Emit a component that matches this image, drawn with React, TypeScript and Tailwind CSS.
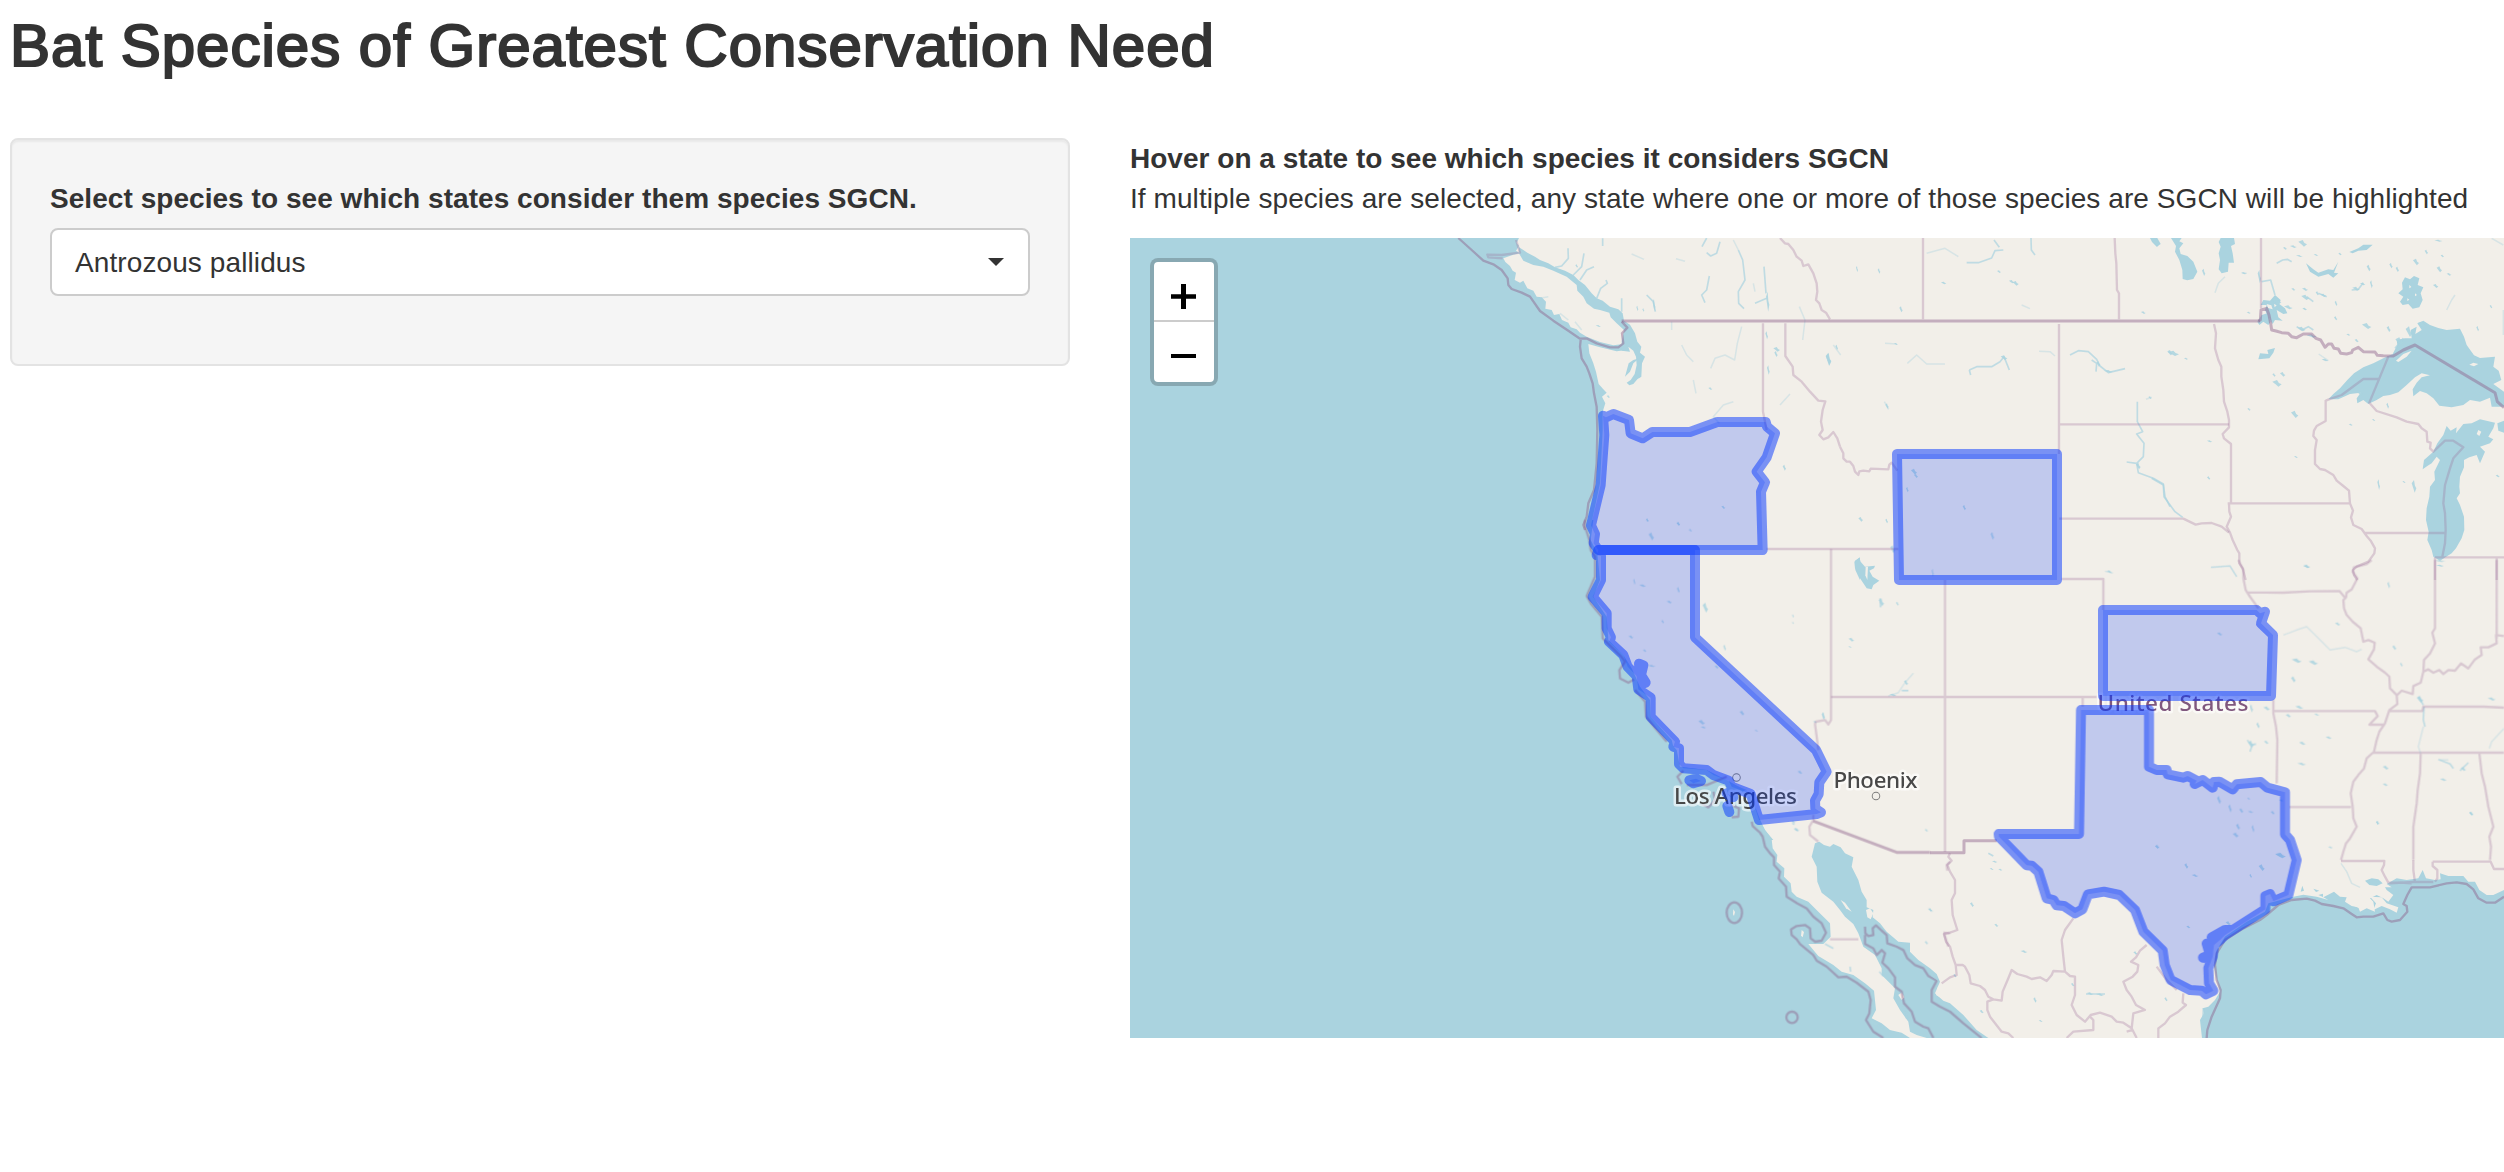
import React from "react";

const LAND = "#f2efe9";
const WATER = "#aad3df";

type Tile = {
  x: number;
  y: number;
  water?: string[];
  land?: string[];
  rivers?: string;
  thinRivers?: string;
  lakes?: number[][];
  country?: string;
  maritime?: string;
  region?: string;
};

/* Each tile is drawn on a grid three times finer than the page. */
const tiles: Tile[] = [
  {
    // Pacific Northwest
    x: 1440,
    y: 230,
    water: [
      "M-930,24 H237 L230,38 237,48 228,62 240,70 220,74 190,85 196,96 210,108 218,122 228,128 224,150 240,158 250,152 262,175 280,182 290,200 305,202 318,215 316,236 335,240 342,255 358,252 366,270 385,278 392,292 410,298 420,308 440,320 480,336 520,346 550,342 560,360 530,364 480,352 445,342 448,370 460,400 468,425 476,462 490,478 500,488 486,500 496,520 488,545 488,600 480,760 450,900 H-930Z",
      "M235,50 L250,60 262,68 285,80 300,90 325,100 345,112 375,122 400,135 415,150 435,165 455,190 470,205 488,212 510,230 535,238 548,250 552,272 570,284 585,310 592,335 604,350 600,368 615,380 606,400 604,440 592,448 580,462 568,466 560,458 572,450 584,432 590,405 588,380 580,362 565,350 570,365 545,362 545,335 552,300 530,280 512,262 508,248 480,240 462,236 440,220 430,200 412,182 410,165 380,140 340,122 310,110 280,105 250,92 238,72Z",
      "M598,385 L580,400 570,425 555,440 566,400 580,390Z",
    ],
    rivers:
      "M345,112 L365,108 385,85 384,55 M400,135 L425,110 432,70 M420,150 L440,120 462,110 M470,205 L482,175 502,160 498,150 M488,25 L488,48 M545,245 L545,205 M800,24 L786,50 M840,35 L830,70 812,78 800,68 M895,60 L908,90 915,150 895,185 896,220 912,236 M808,138 L800,180 785,195 795,218 M972,110 L978,190 M945,220 L980,205 M620,195 L640,215 646,245",
    thinRivers:
      "M880,30 L895,60 M905,290 L892,340 884,390 855,375 825,385 812,415 M725,345 L740,375 760,395 M760,450 L768,490 M880,515 L850,525 820,560 838,580 M575,72 L612,88 M1078,230 L1095,270 1088,330 M1050,492 L1020,525 M940,160 L945,185 M695,275 V300 M708,86 L735,94 M405,275 L425,300 M385,270 L360,250 M300,205 L325,200",
    lakes: [
      [642, 225, 4, 18], [592, 235, 3, 8], [610, 240, 3, 5], [983, 215, 5, 30], [1010, 358, 10, 7], [1008, 372, 5, 9], [1165, 388, 8, 20], [980, 316, 4, 12], [985, 420, 4, 14], [811, 476, 6, 4], [1033, 713, 5, 9], [1190, 352, 4, 8], [850, 832, 6, 5], [622, 870, 4, 5], [715, 882, 5, 5], [475, 288, 8, 3], [505, 500, 5, 4], [410, 108, 4, 5],
    ],
    maritime:
      "M55,24 L95,60 130,92 160,103 185,120 203,145 205,165 215,177 245,188 270,200 300,243 340,272 385,302 420,326 440,325 470,340 510,352 535,352 550,340 546,310 562,293 545,275 M422,330 L420,350 425,385 440,410 448,430 458,460 462,490 470,530 472,600 470,700 462,780 445,820 440,860 430,885 435,900",
    country: "M545,273 H2460",
    region:
      "M969,280 V545 L980,600 M1036,280 V378 L1058,410 1060,435 1085,455 1110,485 1135,512 1156,514 1148,540 1143,575 1148,600 1138,615 1150,628 1165,622 1180,606 1192,625 1200,650 M1020,24 L1035,40 1045,42 1060,60 1070,80 1085,92 1090,108 1105,103 1120,130 1130,160 1132,185 1128,210 1138,220 1145,240 1158,248 1170,268 M188,85 L145,82 142,74 185,75 240,68 228,30",
  },
  {
    // Northern plains
    x: 1820,
    y: 230,
    rivers:
      "M440,98 L475,98 515,84 525,62 550,60 M522,30 L538,52 M633,24 L634,60 645,75 M448,420 L470,410 515,410 540,395 552,380 568,420 M448,420 L452,435 M750,375 L775,362 805,365 830,388 840,408 865,428 915,416 M815,390 L830,400 828,425 M952,515 L952,575 968,605 950,612 972,640 970,680 950,700 920,696 M950,700 L955,728 1000,745 1030,762 1035,800 1050,830",
    thinRivers:
      "M320,70 L375,55 415,80 M262,400 L290,375 320,402 375,402 M657,364 L690,365 705,378 M195,340 L230,342 M40,345 L62,375 M605,225 L630,236 M978,508 L995,502 M193,515 L206,538",
    lakes: [
      [26, 388, 8, 18], [111, 117, 3, 9], [177, 123, 4, 8], [371, 159, 8, 4], [575, 155, 8, 5], [587, 160, 9, 7], [537, 125, 6, 4], [243, 238, 5, 9], [1009, 38, 10, 12], [1000, 28, 8, 6], [970, 248, 7, 4], [228, 342, 6, 3], [201, 528, 5, 8], [552, 383, 10, 7], [835, 402, 6, 8], [865, 424, 14, 4], [1050, 368, 8, 8], [282, 725, 9, 9], [288, 738, 6, 6], [262, 779, 4, 8], [433, 833, 5, 8], [122, 868, 7, 7], [200, 873, 4, 7], [955, 708, 7, 10],
    ],
    region:
      "M309,24 V268 M884,24 L886,70 889,100 891,180 897,190 897,268 M717,282 V672 M718,583 H1227 M718,866 H1090 L1127,884 1145,880 1175,879 1205,890 1227,908 M60,650 L70,670 70,685 80,695 90,695 100,708 105,725 115,735 118,724 130,722 148,724 152,716 205,718 208,704 215,698 232,722",
  },
  {
    // Great Lakes
    x: 2150,
    y: 230,
    water: [
      "M535,508 L550,492 570,475 592,450 612,430 640,412 670,400 700,385 728,372 742,345 740,330 765,325 785,325 782,300 800,290 796,312 815,300 802,280 820,272 840,285 865,294 890,300 930,296 942,320 950,345 972,376 990,384 1035,380 1030,410 1046,422 1054,450 1030,462 1062,485 V530 H1025 L1020,503 990,515 960,510 940,525 905,532 868,527 850,505 830,490 810,483 790,499 788,478 800,458 815,442 840,436 815,430 795,442 770,465 745,487 720,495 700,498 680,510 655,522 640,510 622,520 620,505 632,488 600,492 565,508Z",
      "M818,718 L822,690 850,665 862,640 880,615 890,588 902,602 920,592 918,610 940,582 965,580 990,568 1035,578 1030,595 1015,620 1030,628 1020,640 990,650 1005,665 990,700 980,675 958,682 942,690 942,712 930,740 928,770 930,790 920,805 930,825 942,860 943,900 935,925 918,955 905,970 870,992 850,980 845,960 832,930 836,905 828,870 830,835 838,800 840,770 855,750 853,725 870,690 860,680 845,700 832,708Z",
      "M1042,580 L1062,572 V608 L1045,602Z",
      "M63,24 H95 L88,34 100,40 88,55 92,72 112,78 130,95 142,125 130,147 112,151 98,147 97,120 88,90 75,65 78,48Z",
      "M212,24 H252 L255,42 243,48 248,70 252,98 236,98 234,125 215,130 206,118 210,90 206,70 212,50 206,36Z",
      "M765,142 L780,148 792,138 808,145 803,165 820,172 812,190 818,210 808,232 788,236 775,222 758,225 750,215 760,200 745,190 758,178 756,158Z",
      "M0,24 H22 L32,42 20,50 6,36Z",
      "M340,210 L360,212 375,195 392,210 388,222 405,235 412,250 400,252 380,240 385,262 398,272 375,270 368,282 355,262 345,240 350,225 332,225Z",
      "M322,275 L335,255 352,250 362,275 355,285 340,275 328,285Z",
      "M325,388 L330,370 355,372 352,360 375,354 370,368 358,385Z",
      "M468,100 L490,118 505,128 535,118 550,120 565,95 552,128 565,130 550,143 535,132 505,140 480,125Z",
      "M598,66 L625,55 640,44 668,44 650,60 625,62 608,70Z",
    ],
    land: ["M738,392 L760,372 785,362 770,380 745,396Z", "M958,404 L970,398 985,402 972,409Z", "M985,600 L994,605 988,618 980,612Z", "M350,222 l14,4 l4,12 l-14,-4z M372,222 l8,4 l-6,6z", "M778,165 l6,6 l-6,4z M795,190 l6,5 l-6,4z M772,205 l6,4 l-6,4z"],
    rivers:
      "M335,155 L362,150 375,195 M5,745 L40,765 42,800 75,845 98,862 M470,200 L490,215 M505,190 L530,200 M440,290 L455,300 475,290 490,300 M380,100 L398,90 412,88 425,95 M605,180 L625,178 640,158 M735,355 L760,325",
    thinRivers: "M195,188 L205,160 225,140 M183,1012 L240,1008 260,1040 M275,128 L290,130 M1025,25 L1060,45 M890,240 L905,210 915,195 M1060,240 V315 M506,372 L535,392",
    lakes: [
      [161, 127, 5, 11], [328, 140, 5, 20], [282, 130, 8, 3], [458, 40, 13, 10], [430, 50, 10, 4], [405, 55, 6, 4], [448, 78, 10, 3], [570, 72, 5, 4], [498, 75, 7, 3], [656, 114, 6, 10], [723, 107, 5, 8], [742, 118, 5, 8], [798, 96, 9, 10], [829, 66, 5, 7], [877, 78, 5, 4], [868, 118, 8, 9], [897, 133, 7, 4], [857, 168, 8, 6], [466, 202, 12, 8], [465, 178, 9, 5], [430, 178, 6, 4], [464, 237, 7, 4], [502, 190, 5, 6], [520, 196, 9, 5], [558, 220, 4, 8], [557, 265, 5, 6], [650, 288, 14, 9], [716, 297, 6, 9], [664, 163, 4, 12], [618, 176, 11, 6], [638, 162, 8, 4], [296, 248, 6, 3], [415, 232, 13, 6], [455, 297, 12, 7], [485, 318, 15, 5], [1023, 230, 4, 5], [983, 296, 4, 8], [70, 370, 17, 8], [108, 386, 6, 3], [398, 433, 8, 7], [381, 460, 14, 10], [372, 435, 5, 5], [434, 553, 11, 11], [297, 538, 5, 4], [602, 584, 6, 3], [671, 570, 5, 3], [713, 527, 4, 9], [179, 634, 8, 3], [438, 681, 6, 3], [176, 744, 5, 5], [686, 764, 4, 16], [792, 769, 7, 19], [762, 756, 5, 3], [1043, 738, 6, 4], [525, 390, 10, 4], [470, 1010, 11, 4], [630, 490, 8, 6], [777, 305, 10, 16], [748, 334, 12, 12], [815, 283, 12, 8], [865, 32, 12, 3], [595, 314, 6, 3], [620, 332, 6, 5], [380, 214, 14, 10], [0, 503, 5, 4], [870, 1007, 12, 3],
    ],
    country:
      "M325,273 L331,270 333,240 350,235 357,255 362,280 365,300 378,303 395,308 415,310 425,320 440,323 460,312 485,312 498,325 512,330 525,352 535,342 545,342 552,355 565,357 572,370 590,372 605,368 608,360 625,352 640,365 675,366 682,376 700,377 730,378 760,360 795,345 L1035,488 1042,515 1062,533",
    region:
      "M333,24 V235 M192,282 L198,310 195,355 205,390 214,410 214,440 220,480 222,515 232,545 237,570 237,592 218,612 222,625 243,642 V820 M233,820 H600 M237,820 L238,845 243,860 230,890 240,908 248,930 262,960 268,970 268,1000 278,1015 287,1050 M527,510 V573 L500,588 492,602 490,618 500,630 495,660 495,702 510,717 525,720 550,735 560,752 580,768 597,782 600,820 609,842 603,862 610,885 635,897 650,918 662,932 675,955 673,970 655,995 620,1010 609,1020 612,1035 622,1050 M645,909 H885 M527,512 L545,505 575,495 640,447 690,447 M715,380 L658,518 680,543 740,562 770,575 805,582 815,595 830,605 832,635 842,638 840,655 850,665 885,632 910,632 940,652 910,685 900,715 885,765 880,820 885,850 887,900 885,940 877,980 M855,982 H1062 M855,982 V1050 M1040,982 V1050",
  },
  {
    // California and Nevada
    x: 1560,
    y: 520,
    water: [
      "M-1290,0 H100 L92,60 112,100 120,180 100,230 140,290 145,360 190,405 215,445 240,500 270,540 272,590 335,660 355,740 440,750 510,790 560,810 590,890 615,930 640,960 H-1290Z",
      "M900,112 L885,122 886,150 900,180Z",
    ],
    lakes: [
      [274, 49, 8, 12], [262, 2, 4, 3], [355, 11, 5, 5], [391, 31, 5, 4], [248, 197, 10, 4], [223, 185, 3, 9], [355, 210, 4, 9], [328, 246, 8, 4], [213, 351, 7, 5], [254, 392, 5, 4], [308, 305, 4, 5], [436, 263, 8, 15], [494, 383, 4, 9], [470, 441, 6, 5], [546, 579, 7, 7], [425, 607, 10, 7], [430, 622, 8, 3], [699, 288, 3, 5], [699, 309, 3, 3], [589, 632, 6, 2], [720, 757, 7, 5], [790, 588, 4, 10], [765, 606, 6, 3], [700, 906, 6, 4], [710, 930, 8, 4], [275, 438, 12, 3],
    ],
    maritime:
      "M75,0 L75,20 88,60 92,90 105,110 105,170 80,228 92,250 125,290 128,355 182,408 195,425 178,450 180,475 205,488 222,478 M225,510 L255,545 258,590 290,630 320,665 M370,752 L352,770 365,792 M380,795 L440,795 500,770 M425,850 L445,862 465,840 460,815 M515,892 L535,890 537,865 515,855",
    region: "M813,87 V600 L805,613 795,600 768,605 765,612 770,650 775,690",
  },
  {
    // Baja California
    x: 1600,
    y: 720,
    water: [
      "M-1410,0 H150 L230,90 240,140 320,150 390,185 450,220 482,303 495,330 515,358 518,385 532,405 530,425 553,445 552,470 572,490 575,515 590,530 625,545 655,575 690,610 692,650 670,672 625,672 655,708 700,735 725,755 760,765 795,790 822,812 828,870 815,895 845,910 870,930 905,938 930,954 H-1410Z",
      "M635,410 L645,370 658,365 672,375 690,380 700,372 722,382 735,400 760,412 755,440 775,480 785,515 800,540 800,562 820,570 818,592 840,610 860,635 895,665 930,668 930,695 955,720 990,745 1010,762 1020,785 1005,820 1030,842 1050,850 1090,885 1130,930 1165,954 H980 L950,945 930,935 925,905 900,870 880,835 885,805 870,790 845,765 845,745 825,705 790,680 775,640 760,612 735,590 720,570 700,545 665,518 652,485 650,440Z",
    ],
    land: [
      "M798,570 L810,565 820,580 812,598 802,592Z",
      "M722,540 L735,548 755,575 738,565Z",
      "M895,825 l10,-8 l8,15 l-8,8z",
      "M1008,825 L1014,800 1030,783 1060,790 V843 L1030,838Z",
      "M605,630 l7,6 l-4,16 l-5,-5z M400,568 l5,8 l-3,12 l-3,-5z",
    ],
    rivers: "M675,672 L700,685 M750,740 L752,755 M838,755 L850,768 M905,840 L918,870 920,895 M820,905 L850,925 M890,800 L905,820",
    thinRivers: "M985,565 L998,575",
    lakes: [[979, 331, 5, 4], [979, 668, 5, 5], [820, 908, 12, 6], [588, 328, 7, 4], [580, 312, 5, 3]],
    country: "M640,303 L890,397 H990",
    maritime:
      "M455,305 L458,318 480,338 488,350 495,380 510,400 522,412 522,435 540,455 536,475 558,500 560,530 592,550 620,565 640,590 665,610 678,638 665,662 645,665 632,655 630,625 615,615 590,618 573,628 575,645 590,658 600,672 640,705 650,722 680,740 715,772 740,770 770,788 805,815 812,840 808,880 798,900 820,935 850,954 M795,620 L796,640 805,648 820,645 818,625 828,616 845,632 860,645 862,670 890,680 910,690 922,715 945,735 970,745 985,768 1010,782 995,810 995,845 1020,860 1050,875 1090,910 1145,954 M795,645 L795,672 820,685 830,705 845,690 855,700 847,728 865,745 885,772 885,800 905,815 912,850 935,875 945,905 970,920 985,925 1000,954 M380,578 a23,31 0 1 0 46,0 a23,31 0 1 0 -46,0 M559,892 a17,17 0 1 0 34,0 a17,17 0 1 0 -34,0",
    region: "M640,285 L640,300 628,320 630,345 655,365 M690,658 H775 M1050,425 L1040,435 1042,452 M1030,638 L1050,640 M1032,640 L1045,680",
  },
  {
    // Rockies and Southwest
    x: 1820,
    y: 520,
    water: ["M103,125 L118,113 122,125 135,140 165,137 162,145 148,152 158,170 178,182 160,195 155,208 140,205 130,190 118,172 118,158 105,145Z"],
    land: ["M137,140 l7,0 l-2,40 l-6,-14z"],
    rivers: "M245,512 L265,512 M180,235 L182,262",
    thinRivers: "M205,528 L235,518 255,488 280,460 M855,154 L878,160",
    lakes: [[184, 247, 8, 12], [232, 251, 4, 6], [94, 359, 8, 6], [90, 381, 5, 2], [219, 525, 10, 4], [218, 88, 7, 12], [258, 488, 6, 8], [517, 48, 5, 12], [338, 158, 3, 12], [868, 155, 8, 4], [10, 588, 4, 12]],
    region: "M-160,87 H235 M33,531 H830 M375,180 V996 M725,177 H850 V270 M788,531 V560",
  },
  {
    // Midwest and mid-South
    x: 2150,
    y: 560,
    rivers: "M822,440 L820,480 825,500 M805,410 L820,435 M930,632 L955,608 M865,598 L900,612 910,625 M292,540 L305,560 300,575 M300,555 L318,552",
    thinRivers: "M1018,565 L1025,545 1062,505 M400,225 L440,210 470,200 495,225 540,270 585,262 620,275 635,268 M820,500 L805,560 812,580 M183,22 L240,18 260,50 M870,600 L895,600",
    lakes: [
      [470, 19, 9, 5], [563, 192, 8, 5], [733, 263, 6, 7], [754, 314, 4, 6], [440, 302, 15, 7], [490, 308, 14, 7], [430, 358, 7, 9], [448, 442, 12, 5], [415, 467, 8, 5], [500, 464, 8, 3], [457, 550, 10, 5], [536, 533, 9, 4], [455, 612, 13, 4], [707, 623, 9, 6], [706, 674, 8, 4], [683, 788, 5, 5], [880, 659, 10, 4], [940, 627, 8, 6], [964, 761, 6, 6], [324, 496, 5, 9], [349, 547, 7, 5], [350, 445, 10, 6], [303, 552, 9, 10], [304, 445, 5, 12], [810, 418, 10, 10], [1025, 417, 12, 5], [541, 862, 7, 3], [716, 75, 4, 10], [390, 885, 14, 6], [207, 720, 6, 12], [296, 716, 5, 3], [274, 752, 6, 7], [302, 756, 8, 3], [240, 745, 5, 12], [264, 800, 6, 9], [309, 806, 4, 11], [257, 825, 9, 7], [209, 222, 8, 5], [22, 860, 6, 5], [393, 721, 7, 3], [368, 758, 6, 5], [870, 3, 16, 3],
    ],
    region:
      "M292,97 L400,98 480,94 568,93 585,113 M265,0 L280,30 280,55 287,90 300,110 325,145 M665,0 L650,12 612,22 608,35 622,55 605,88 590,98 588,112 580,120 582,145 590,165 608,185 632,205 640,245 655,240 674,248 672,268 655,298 680,320 705,338 718,350 720,385 740,405 742,432 718,450 705,490 688,515 680,540 672,575 650,595 642,625 625,645 610,665 602,700 608,740 610,775 620,800 600,835 588,850 580,875 573,900 M370,453 H675 L683,468 658,494 H705 M720,453 H817 L820,440 1000,440 1062,443 M670,578 H1062 M812,580 L810,640 803,690 800,730 790,800 790,900 M988,580 L995,640 1005,680 1015,740 1030,800 1018,830 1023,860 1020,900 M855,0 V205 L847,218 855,250 840,280 822,300 820,335 M820,335 L835,328 850,338 868,330 880,342 895,330 915,332 933,310 955,325 975,298 995,285 992,262 1015,262 1040,250 1038,225 1062,228 M1040,0 V235 M820,335 L812,368 790,378 788,402 755,392 738,408 M370,420 V460 L378,500 382,540 380,670 M418,741 H603",
  },
  {
    // Texas and northern Mexico
    x: 1930,
    y: 680,
    rivers: "M175,520 L190,528 M468,942 H525 M3,885 L25,900 M820,985 L818,1050",
    lakes: [[185, 567, 6, 3], [211, 569, 6, 3], [194, 545, 8, 3], [126, 674, 6, 7], [199, 736, 6, 5], [282, 815, 10, 4], [315, 960, 5, 8], [332, 1023, 6, 3], [708, 958, 5, 6], [480, 941, 10, 4], [510, 944, 12, 4], [155, 995, 6, 5], [428, 914, 5, 5], [616, 819, 6, 5], [75, 887, 5, 5], [681, 501, 6, 5], [769, 558, 6, 8], [795, 587, 10, 4], [775, 741, 6, 4], [995, 563, 9, 10], [962, 588, 4, 6], [1052, 527, 16, 8], [895, 730, 8, 6], [1, 690, 6, 5]],
    country: "M0,518 H102 V482 H200",
    region:
      "M60,520 L55,530 65,542 52,555 60,575 75,600 75,640 65,660 68,705 82,750 60,758 42,762 48,785 60,800 68,830 77,855 98,855 105,860 118,885 122,910 150,918 165,930 175,950 190,958 215,962 218,935 235,895 245,870 262,882 290,890 305,897 330,892 350,903 365,885 370,873 405,875 420,888 435,890 435,945 425,975 440,1005 465,1025 482,1005 510,998 545,1010 560,1025 580,1028 605,1045 M190,958 L172,965 172,990 180,1010 215,1055 235,1060 250,1074 M77,855 L80,885 60,892 35,910 M430,715 L405,750 395,780 400,830 405,875 M650,795 L630,812 618,832 603,845 625,855 622,875 608,890 580,905 590,930 605,950 618,975 645,990 610,1000 605,1045 620,1074 M410,1074 L430,1055 490,1050 490,1020 480,1010 M590,1055 L608,1050 M760,940 L758,968 768,975 745,995 720,1010 705,1030 685,1045 685,1074 M680,860 L695,880 710,900 740,930",
  },
  {
    // Gulf coast
    x: 2200,
    y: 800,
    water: [
      "M6,714 L0,660 12,640 8,625 25,620 45,600 60,575 48,530 42,500 50,450 75,410 140,365 195,335 205,310 280,290 310,284 350,290 385,300 370,292 402,275 420,290 440,292 435,305 455,318 475,322 480,335 500,325 525,335 520,305 510,295 530,285 550,295 565,305 580,285 560,270 555,262 575,262 560,252 590,235 620,240 655,235 668,210 678,235 705,240 722,238 720,220 745,228 790,228 805,245 825,245 838,270 860,285 880,285 912,270 V714Z",
      "M495,242 L515,235 535,238 548,250 530,258 508,255Z",
      "M302,275 l5,-18 l5,15z M340,266 l18,6 l-10,4z M355,285 l14,-4 l0,10z",
    ],
    land: ["M510,290 L545,292 560,310 595,322 590,338 570,328 545,318 520,330 528,310Z", "M455,300 l25,8 l10,-6 l15,14 l-20,12 l-22,-10z"],
    thinRivers: "M423,190 L440,215 455,250 480,262",
    lakes: [[532, 69, 4, 6], [813, 41, 6, 5]],
    maritime:
      "M20,714 L22,690 35,650 60,595 62,570 50,540 45,495 50,460 75,420 130,385 180,360 200,345 235,315 275,300 320,296 345,302 365,312 400,318 430,325 455,342 470,352 490,350 520,350 550,340 562,360 575,365 600,360 622,335 620,318 610,312 622,285 635,262 690,262 740,250 770,247 800,252 820,268 835,295 860,308 885,308 912,290",
    region:
      "M423,183 H553 L552,195 545,210 555,230 565,248 H600 L635,250 M640,180 L640,210 645,248 M698,185 H872 L882,207 H912 M698,185 L698,198 712,210 712,235 705,245 M568,250 L640,246 700,246",
  },
];

type Shape = { name: string; x: number; y: number; d: string };

const highlighted: Shape[] = [
  {
    name: "Oregon",
    x: 1440,
    y: 230,
    d: "M489,557 L498,562 520,552 567,570 572,610 608,625 637,606 750,606 832,576 977,576 981,590 1005,610 980,682 950,725 975,757 963,785 968,960 H475 L461,940 465,912 453,886 482,765 493,615Z",
  },
  {
    name: "California",
    x: 1560,
    y: 520,
    d: "M115,90 H405 V352 L768,690 800,755 778,787 776,822 765,842 766,866 783,877 770,882 597,900 572,822 515,800 506,782 460,765 440,750 370,745 357,732 357,685 340,680 345,665 272,590 272,533 235,508 230,468 203,440 190,405 147,365 153,352 140,325 140,280 98,230 123,180 123,108 110,106Z M237,431 L250,436 243,465 257,488 252,490 234,462 238,440Z M388,781 L400,790 423,783 408,776Z M500,820 L512,832 520,832Z M502,858 L508,876Z",
  },
  { name: "Wyoming", x: 1820, y: 230, d: "M231,672 H711 V1050 H237Z" },
  { name: "Kansas", x: 2150, y: 560, d: "M-141,150 H320 L330,160 345,155 333,190 369,225 363,408 H-141Z" },
  {
    name: "Texas",
    x: 1930,
    y: 680,
    d: "M453,90 H657 V260 L680,270 710,270 713,283 760,293 773,288 800,302 794,312 818,300 848,323 852,306 868,305 908,328 920,313 992,306 1012,323 1065,337 V463 L1080,480 1100,540 1075,645 1030,664 1020,642 1006,648 1006,688 885,765 870,780 852,795 848,830 835,865 837,910 850,932 828,943 815,932 780,930 722,900 704,855 698,812 640,755 615,690 568,645 522,635 474,643 457,688 435,700 402,678 380,676 370,660 350,655 325,575 305,557 290,556 207,470 206,462 H447Z M885,750 L905,750 870,775 845,772 885,750Z M830,791 L850,790 846,835 819,833 840,825Z",
  },
];

function BaseMap() {
  return (
    <>
      <rect x="1130" y="238" width="1374" height="800" fill={LAND} />
      <g fill={WATER}>
        <rect x="1130" y="238" width="388" height="2" />
        <rect x="1130" y="238" width="3" height="800" />
        <rect x="1130" y="1035" width="775" height="3" />
        <rect x="2203" y="1035" width="301" height="3" />
        <rect x="2501" y="895" width="3" height="140" />
      </g>
      <g filter="url(#tile-softness)">
        {tiles.map((t, i) => (
          <g key={i} transform={`translate(${t.x} ${t.y}) scale(0.33333)`}>
            {t.water?.map((d, k) => <path key={k} d={d} fill={WATER} />)}
            {t.land?.map((d, k) => <path key={k} d={d} fill={LAND} />)}
          </g>
        ))}
        {tiles.map((t, i) => (
          <g key={i} transform={`translate(${t.x} ${t.y}) scale(0.33333)`} fill="none" strokeLinejoin="round">
            <path d={t.rivers ?? ""} stroke={WATER} strokeWidth="5" strokeOpacity="0.7" />
            <path d={t.thinRivers ?? ""} stroke={WATER} strokeWidth="4.5" strokeOpacity="0.38" />
            {t.lakes?.map(([cx, cy, rx, ry], k) => (
              <path
                key={k}
                d={`M${cx - rx},${cy - ry * 0.5} L${cx},${cy - ry} ${cx + rx * 0.4},${cy - ry * 0.1} ${cx + rx},${cy + ry * 0.3} ${cx + rx * 0.3},${cy + ry} ${cx - rx * 0.3},${cy + ry * 0.3}Z`}
                fill={WATER}
                fillOpacity="0.85"
              />
            ))}
            <path d={t.region ?? ""} stroke="#9a6a97" strokeWidth="7" strokeOpacity="0.29" />
            <path d={t.maritime ?? ""} stroke="#8d618b" strokeWidth="7" strokeOpacity="0.46" />
            <path d={t.country ?? ""} stroke="#8d618b" strokeWidth="9" strokeOpacity="0.46" />
          </g>
        ))}
        <MapLabels />
      </g>
    </>
  );
}

function MapLabels() {
  return (
    <g fontFamily='"Noto Sans", sans-serif' fontWeight="500" stroke="#ffffff" strokeOpacity="0.6" strokeLinejoin="round" paintOrder="stroke">
      <text x="1674" y="803.5" fontSize="22.5" textLength="123" strokeWidth="5" fill="#484848">Los Angeles</text>
      <text x="1833.5" y="787.5" fontSize="22.5" textLength="84" strokeWidth="5" fill="#484848">Phoenix</text>
      <text x="2097.5" y="710.5" fontSize="22.5" textLength="151" strokeWidth="5" fill="#80587e">United States</text>
      <g fill="#f2efe9" stroke="#666" strokeWidth="1.9" strokeOpacity="0.85">
        <circle cx="1736.5" cy="777.5" r="3.3" />
        <circle cx="1876" cy="796" r="3.3" />
      </g>
    </g>
  );
}

function SpeciesMap() {
  return (
    <svg className="block h-[800px] w-[1374px]" viewBox="1130 238 1374 800" aria-label="Map of the United States">
      <defs>
        <filter id="tile-softness" filterUnits="userSpaceOnUse" x="1130" y="238" width="1374" height="800" colorInterpolationFilters="sRGB">
          <feGaussianBlur stdDeviation="0.65" />
        </filter>
      </defs>
      <BaseMap />
      {highlighted.map((s) => (
        <path
          key={s.name}
          transform={`translate(${s.x} ${s.y}) scale(0.33333)`}
          d={s.d}
          fill="#0033ff"
          fillOpacity="0.2"
          stroke="#0033ff"
          strokeOpacity="0.5"
          strokeWidth="30"
          strokeLinejoin="round"
          strokeLinecap="round"
        />
      ))}
    </svg>
  );
}

function ZoomControl() {
  return (
    <div className="absolute left-5 top-5 flex w-[68px] flex-col overflow-hidden rounded-[8px] border-4 border-black/20 bg-white bg-clip-padding">
      <button className="flex h-[60px] items-center justify-center border-b-2 border-[#ccc]" aria-label="Zoom in">
        <svg className="mt-2.5 ml-[-1px] h-[25px] w-[25px]" viewBox="0 0 25 25">
          <path d="M10 0h5v25h-5zM0 10.3h25v4.4H0z" />
        </svg>
      </button>
      <button className="flex h-[60px] items-center justify-center" aria-label="Zoom out">
        <svg className="mt-2 ml-[-1px] h-[4px] w-[25px]" viewBox="0 0 25 4">
          <path d="M0 0h25v4H0z" />
        </svg>
      </button>
    </div>
  );
}

export default function App() {
  return (
    <div className="h-[1172px] w-[2504px] overflow-hidden bg-white font-['Liberation_Sans',Arial,sans-serif] text-[28px] leading-[40px] text-[#333]">
      <h2 className="ml-[10px] pt-[13px] text-[60px] leading-[66px] font-normal tracking-[1px] whitespace-nowrap [-webkit-text-stroke:2.2px_#333]">
        Bat Species of Greatest Conservation Need
      </h2>
      <div className="mt-[59px] flex">
        <section className="ml-[10px] h-[228px] w-[1060px] shrink-0 rounded-[8px] border-2 border-[#e3e3e3] bg-[#f5f5f5] px-[38px] pt-[39px] shadow-[inset_0_2px_2px_rgba(0,0,0,0.05)]">
          <label className="block font-bold tracking-[0.05px] whitespace-nowrap">
            Select species to see which states consider them species SGCN.
          </label>
          <div className="mt-[9px] flex h-[68px] items-center justify-between rounded-[8px] border-2 border-[#ccc] bg-white px-6">
            <span className="mt-px -ml-px tracking-[0.1px]">Antrozous pallidus</span>
            <svg className="h-2 w-4" viewBox="0 0 16 8" fill="#333">
              <path d="M0 0h16L8 8z" />
            </svg>
          </div>
        </section>
        <section className="ml-[60px] w-[1374px] shrink-0">
          <div className="pt-px whitespace-nowrap">
            <p className="font-bold tracking-[0.02px]">Hover on a state to see which species it considers SGCN</p>
            <p className="tracking-[0.07px]">If multiple species are selected, any state where one or more of those species are SGCN will be highlighted</p>
          </div>
          <div className="relative mt-[19px]">
            <SpeciesMap />
            <ZoomControl />
          </div>
        </section>
      </div>
    </div>
  );
}
